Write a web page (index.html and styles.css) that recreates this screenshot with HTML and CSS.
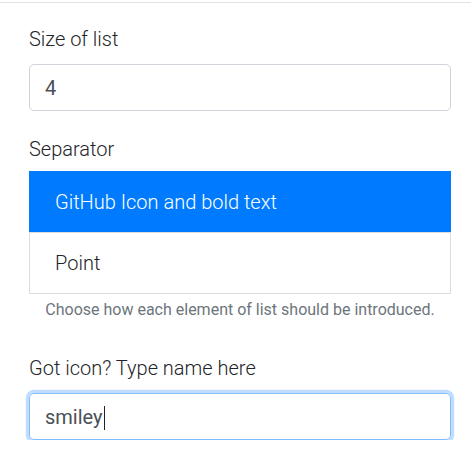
FILE: index.html
```html
<!DOCTYPE html>
<html>
<head>
<meta charset="utf-8">
<link rel="stylesheet" href="styles.css">
</head>
<body>
<div class="topbar"></div>
<div class="form">
  <div class="group">
    <label class="label">Size of list</label>
    <div class="input">4</div>
  </div>
  <div class="group">
    <label class="label label-tight">Separator</label>
    <ul class="list">
      <li class="item active">GitHub Icon and bold text</li>
      <li class="item">Point</li>
    </ul>
    <p class="help">Choose how each element of list should be introduced.</p>
  </div>
  <div class="group group-last">
    <label class="label">Got icon? Type name here</label>
    <div class="input focus">smiley<span class="caret"></span></div>
  </div>
</div>
</body>
</html>
```

FILE: styles.css
```css
html, body {
  margin: 0;
  padding: 0;
  background: #fff;
}
body {
  font-family: Roboto, "Liberation Sans", sans-serif;
  color: #212529;
}
.topbar {
  height: 2px;
  border-bottom: 1px solid #e3e1ea;
}
.form {
  width: 422px;
  padding: 21px 0 0 29px;
}
.group {
  margin-bottom: 23px;
}
.group-last {
  margin-bottom: 0;
}
.label {
  display: block;
  font-size: 20px;
  line-height: 30px;
  font-weight: 300;
  margin-bottom: 10px;
}
.label-tight {
  margin-bottom: 7px;
}
.input {
  box-sizing: border-box;
  height: 47px;
  padding: 7.5px 15px;
  border: 1px solid #ced4da;
  border-radius: 5px;
  font-size: 20px;
  line-height: 30px;
  color: #495057;
  display: flex;
  align-items: center;
}
.input.focus {
  border-color: #80bdff;
  box-shadow: 0 0 0 3.2px rgba(0, 123, 255, 0.25);
}
.caret {
  display: inline-block;
  width: 1px;
  height: 24px;
  background: #222;
  margin-left: 1px;
  margin-top: 3px;
}
.list {
  list-style: none;
  margin: 0;
  padding: 0;
}
.item {
  padding: 15px 25px;
  font-size: 20px;
  line-height: 30px;
  font-weight: 300;
  border: 1px solid #dcdcdc;
  color: #212529;
}
.item + .item {
  margin-top: -1px;
}
.item.active {
  background: #007bff;
  border-color: #007bff;
  color: #fff;
}
.help {
  margin: 4px 0 0;
  text-align: center;
  font-size: 16px;
  line-height: 24px;
  color: #6c757d;
}
.group:has(.help) {
  margin-bottom: 31px;
}
```
